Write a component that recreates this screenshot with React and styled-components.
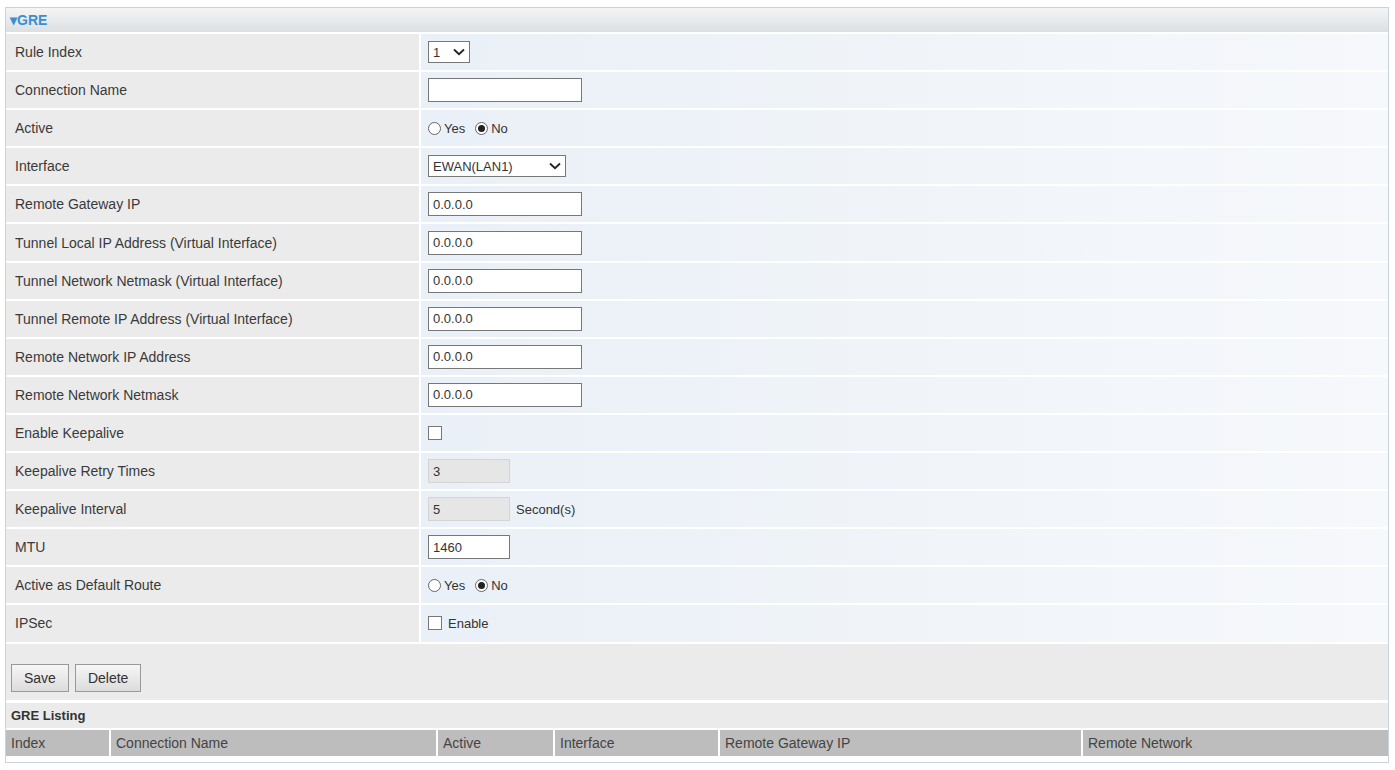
import React from "react";
import styled, { createGlobalStyle } from "styled-components";

const G = createGlobalStyle`
  body { margin: 0; background: #fff; font-family: "Liberation Sans", Arial, sans-serif; font-size: 14px; color: #333; }
`;
const Panel = styled.div`
  margin: 7px 6px 0 5px; border: 1px solid #c9d3dd; height: 756px; box-sizing: border-box;
  display: flex; flex-direction: column;
`;
const Head = styled.div`
  height: 24px; background: linear-gradient(#f4f5f6, #dcdfe2); color: #3a8fd0; font-weight: bold;
  font-size: 14px; display: flex; align-items: center; padding-left: 4px;
`;
const Row = styled.div`
  display: grid; grid-template-columns: 413px 1fr; gap: 2px; height: 36.1px; margin-top: 2px;
`;
const Label = styled.div`
  background: #ebebeb; display: flex; align-items: center; padding-left: 9px; font-size: 14px; color: #3a3a3a;
`;
const Value = styled.div`
  background: linear-gradient(90deg, #eaf0f7, #f6f8fb); display: flex; align-items: center; padding-left: 7px; gap: 6px;
`;
const Input = styled.div`
  width: ${p => p.w || 154}px; height: 24px; box-sizing: border-box; border: 1px solid ${p => p.dis ? "#d4d4d4" : "#777"};
  background: ${p => p.dis ? "#e6e6e6" : "#fff"}; font-size: 13px; display: flex; align-items: center; padding-left: 4px; color: #333;
`;
const Select = styled.div`
  width: ${p => p.w}px; height: 22px; box-sizing: border-box; border: 1px solid #777; background: #fff; font-size: 13px;
  display: flex; align-items: center; justify-content: space-between; padding: 0 4px;
`;
const Box = styled.div`
  width: 14px; height: 14px; border: 1px solid #777; background: #fff; box-sizing: border-box;
`;
const Radio = styled.span`
  width: 13px; height: 13px; border-radius: 50%; border: 1px solid #666; background: #fff; box-sizing: border-box;
  display: inline-flex; align-items: center; justify-content: center; margin-right: 3px;
  &::after { content: ""; width: 7px; height: 7px; border-radius: 50%; background: ${p => p.on ? "#222" : "transparent"}; }
`;
const RL = styled.span` display: inline-flex; align-items: center; font-size: 13px; margin-right: 4px; `;
const Text = styled.span` font-size: 13px; `;
const BtnRow = styled.div`
  height: 56px; background: #ebebeb; margin-top: 2px; display: flex; align-items: flex-end; padding: 0 0 8px 5px; gap: 6px; box-sizing: border-box;
`;
const Btn = styled.div`
  border: 1px solid #999; background: linear-gradient(#f6f6f6, #dcdcdc); font-size: 14px; padding: 5px 12px; color: #333;
`;
const ListTitle = styled.div`
  height: 25px; background: #ebebeb; margin-top: 3px; font-weight: bold; font-size: 13px; display: flex; align-items: center; padding-left: 5px;
`;
const THead = styled.div`
  display: grid; grid-template-columns: 103px 325px 115px 163px 361px 1fr; gap: 2px; margin-top: 2px; height: 26px;
`;
const TH = styled.div` background: #bdbdbd; display: flex; align-items: center; padding-left: 5px; font-size: 14px; color: #444; `;

const Chev = () => (
  <svg width="12" height="8" viewBox="0 0 12 8"><path d="M1 1.5 L6 6.2 L11 1.5" fill="none" stroke="#222" strokeWidth="1.8" /></svg>
);

const ip = <Input>0.0.0.0</Input>;
const rows = [
  ["Rule Index", <Select w={42}>1 <Chev /></Select>],
  ["Connection Name", <Input />],
  ["Active", <><RL><Radio />Yes</RL><RL><Radio on />No</RL></>],
  ["Interface", <Select w={138}>EWAN(LAN1) <Chev /></Select>],
  ["Remote Gateway IP", ip],
  ["Tunnel Local IP Address (Virtual Interface)", ip],
  ["Tunnel Network Netmask (Virtual Interface)", ip],
  ["Tunnel Remote IP Address (Virtual Interface)", ip],
  ["Remote Network IP Address", ip],
  ["Remote Network Netmask", ip],
  ["Enable Keepalive", <Box />],
  ["Keepalive Retry Times", <Input w={82} dis>3</Input>],
  ["Keepalive Interval", <><Input w={82} dis>5</Input><Text>Second(s)</Text></>],
  ["MTU", <Input w={82}>1460</Input>],
  ["Active as Default Route", <><RL><Radio />Yes</RL><RL><Radio on />No</RL></>],
  ["IPSec", <><Box /><Text>Enable</Text></>],
];

export default function App() {
  return (
    <>
      <G />
      <Panel>
        <Head>▾GRE</Head>
        {rows.map(([l, v]) => (
          <Row key={l}><Label>{l}</Label><Value>{v}</Value></Row>
        ))}
        <BtnRow><Btn>Save</Btn><Btn>Delete</Btn></BtnRow>
        <ListTitle>GRE Listing</ListTitle>
        <THead>
          {["Index", "Connection Name", "Active", "Interface", "Remote Gateway IP", "Remote Network"].map(h => <TH key={h}>{h}</TH>)}
        </THead>
      </Panel>
    </>
  );
}
